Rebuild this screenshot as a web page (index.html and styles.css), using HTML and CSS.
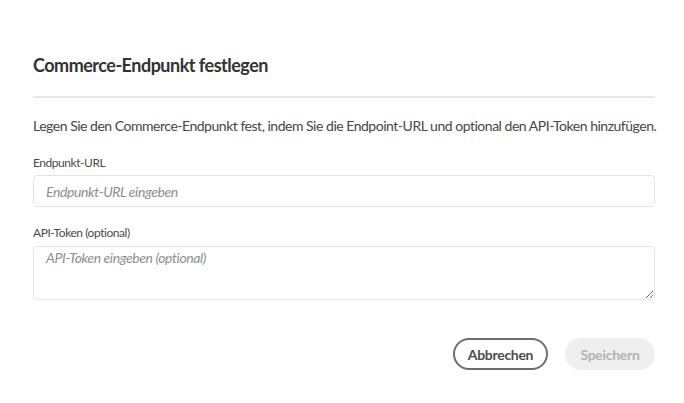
FILE: index.html
```html
<!DOCTYPE html>
<html lang="de">
<head>
<meta charset="utf-8">
<title>Commerce-Endpunkt festlegen</title>
<link rel="stylesheet" href="styles.css">
</head>
<body>
<div class="dialog">
  <h2 class="title">Commerce-Endpunkt festlegen</h2>
  <div class="divider"></div>
  <p class="desc">Legen Sie den Commerce-Endpunkt fest, indem Sie die Endpoint-URL und optional den API-Token hinzufügen.</p>
  <label class="label label-first" for="url">Endpunkt-URL</label>
  <input class="field" id="url" type="text" placeholder="Endpunkt-URL eingeben">
  <label class="label label-second" for="token">API-Token (optional)</label>
  <textarea class="area" id="token" placeholder="API-Token eingeben (optional)"></textarea>
  <div class="actions">
    <button class="btn btn-secondary" type="button">Abbrechen</button>
    <button class="btn btn-disabled" type="button" disabled>Speichern</button>
  </div>
</div>
</body>
</html>
```

FILE: styles.css
```css
html, body {
  margin: 0;
  padding: 0;
  background: #ffffff;
}

body {
  font-family: "Lato", "Liberation Sans", sans-serif;
  color: #4b4b4b;
}

.dialog {
  box-sizing: border-box;
  width: 684px;
  padding: 53px 29px 0 33px;
  display: flex;
  flex-direction: column;
}

.title {
  margin: 0;
  font-size: 18px;
  line-height: 24px;
  font-weight: 700;
  letter-spacing: -0.5px;
  color: #323232;
}

.divider {
  margin-top: 19px;
  height: 2px;
  background: #e8e8e8;
}

.desc {
  margin: 18px 0 0;
  font-size: 14px;
  line-height: 20px;
  letter-spacing: -0.48px;
  white-space: nowrap;
  color: #464646;
}

.label {
  display: block;
  font-size: 12px;
  line-height: 16px;
  letter-spacing: -0.45px;
  color: #4b4b4b;
}

.label-first {
  margin-top: 19px;
}

.label-second {
  margin-top: 18px;
}

.field,
.area {
  box-sizing: border-box;
  width: 100%;
  margin: 4px 0 0;
  border: 1px solid #e3e3e3;
  border-radius: 4px;
  background: #ffffff;
  font-family: "Lato", "Liberation Sans", sans-serif;
  font-size: 14px;
  letter-spacing: -0.4px;
  color: #2c2c2c;
  outline: none;
}

.field {
  height: 32px;
  padding: 0 12px;
}

.area {
  margin-top: 5px;
  height: 54px;
  padding: 2px 12px;
  line-height: 17px;
  resize: vertical;
  display: block;
}

.field::placeholder,
.area::placeholder {
  font-style: italic;
  color: #8e8e8e;
  opacity: 1;
}

.actions {
  margin-top: 38px;
  display: flex;
  justify-content: flex-end;
  gap: 17px;
}

.btn {
  box-sizing: border-box;
  height: 32px;
  border-radius: 16px;
  font-family: "Lato", "Liberation Sans", sans-serif;
  font-size: 14px;
  font-weight: 700;
  letter-spacing: -0.3px;
  padding: 0 12px;
}

.btn-secondary {
  width: 95px;
  border: 2px solid #6e6e6e;
  background: #ffffff;
  color: #4b4b4b;
}

.btn-disabled {
  width: 90px;
  border: 2px solid #efefef;
  background: #efefef;
  color: #b3b3b3;
}
```
